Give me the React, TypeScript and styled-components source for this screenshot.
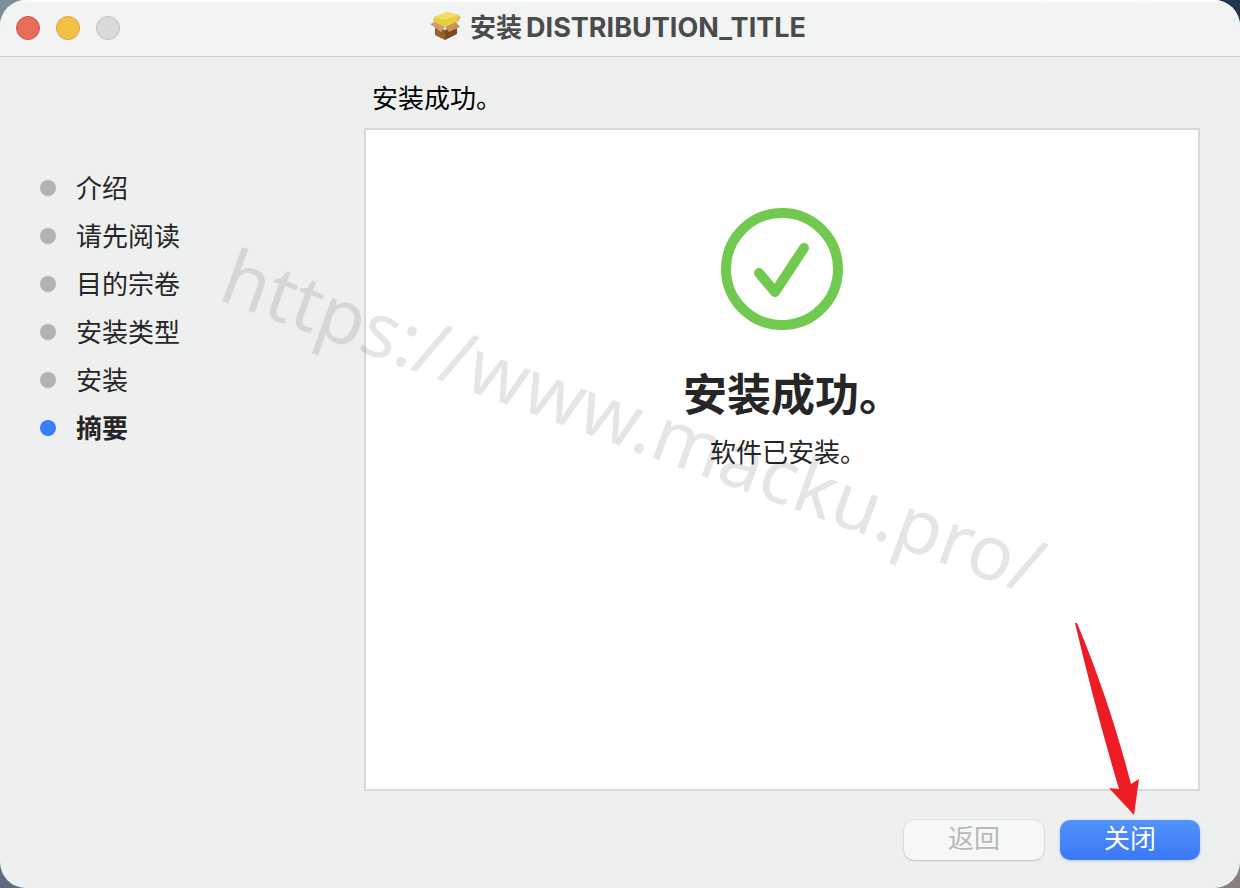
import React from "react";
import styled, { createGlobalStyle } from "styled-components";

const Global = createGlobalStyle`
  * { box-sizing: border-box; }
  body {
    margin: 0;
    background: linear-gradient(90deg, #7b8f96 0, #7b8f96 50%, #20364c 50%) 0 0 / 100% 50% no-repeat,
      linear-gradient(90deg, #5d6b7c 0, #5d6b7c 50%, #8a7f7f 50%) 0 100% / 100% 50% no-repeat;
    font-family: Inter, "Noto Sans CJK SC", sans-serif;
    font-size: 26px;
    line-height: 32px;
    color: #262626;
  }
`;

const Window = styled.div`
  position: relative;
  display: flex;
  flex-direction: column;
  min-height: 100vh;
  overflow: hidden;
  border-radius: 26px;
  background: #eef0ef;
`;

const TitleBar = styled.header`
  display: grid;
  grid-template-columns: 1fr auto 1fr;
  align-items: center;
  height: 57px;
  padding: 0 16px;
  background: linear-gradient(90deg, #f2f4f3 60%, #f2f3f5);
  border-bottom: 1px solid #c9cbca;
  box-shadow: inset 0 2px 0 #fafbfb;
`;

const Lights = styled.div`
  display: flex;
  gap: 16px;
`;

const Light = styled.button<{ $fill: string; $edge: string }>`
  width: 24px;
  height: 24px;
  padding: 0;
  border: 1px solid ${(p) => p.$edge};
  border-radius: 50%;
  background: ${(p) => p.$fill};
`;

const Title = styled.h1`
  display: flex;
  align-items: center;
  gap: 8px;
  margin: 0;
  padding-right: 4px;
  font-size: 26px;
  font-weight: 700;
  line-height: 32px;
  color: #4a4c4b;
`;

const TitleText = styled.span`
  display: flex;
  align-items: baseline;
  gap: 4px;
`;

const ProductName = styled.span`
  font-size: 27px;
`;

const Content = styled.div`
  flex: 1;
  display: grid;
  grid-template-columns: 324px 1fr;
  padding: 24px 40px 28px 40px;
`;

const Steps = styled.ol`
  display: flex;
  flex-direction: column;
  gap: 16px;
  margin: 0;
  padding: 92px 0 0;
  list-style: none;
`;

const Step = styled.li<{ $current?: boolean }>`
  display: flex;
  align-items: center;
  gap: 20px;
  font-weight: ${(p) => (p.$current ? 700 : 400)};

  &::before {
    content: "";
    width: 16px;
    height: 16px;
    margin-bottom: 2px;
    border-radius: 50%;
    background: ${(p) => (p.$current ? "#3c7cf7" : "#b1b3b2")};
  }
`;

const Main = styled.main`
  display: flex;
  flex-direction: column;
`;

const Heading = styled.h2`
  margin: 0;
  padding: 2px 8px 13px;
  font-size: 26px;
  font-weight: 400;
  line-height: 32px;
  color: #000;
`;

const Panel = styled.section`
  flex: 1;
  display: flex;
  flex-direction: column;
  align-items: center;
  padding-top: 77px;
  border: 2px solid #d7d9d8;
  background: #fff;
`;

const Result = styled.h3`
  margin: 0;
  padding: 32px 0 10px 22px;
  font-size: 44px;
  font-weight: 700;
  line-height: 64px;
`;

const Detail = styled.p`
  margin: 0;
  padding-left: 12px;
`;

const Footer = styled.footer`
  display: flex;
  justify-content: flex-end;
  gap: 16px;
  padding-top: 29px;
`;

const Button = styled.button<{ $primary?: boolean }>`
  width: 140px;
  height: 40px;
  padding: 0 0 2px;
  border: 0;
  border-radius: 10px;
  font: inherit;
  color: ${(p) => (p.$primary ? "#fff" : "#b7b9b8")};
  background: ${(p) => (p.$primary ? "linear-gradient(#5292fb, #3a78f7)" : "#f6f8f7")};
  box-shadow: ${(p) =>
    p.$primary ? "0 1px 3px rgba(60, 120, 247, 0.35)" : "0 0 1px 1px rgba(0, 0, 0, 0.04), 0 1px 2px rgba(0, 0, 0, 0.15)"};
`;

const Watermark = styled.div`
  position: absolute;
  inset: 0;
  display: flex;
  align-items: center;
  justify-content: center;
  pointer-events: none;

  span {
    font-family: "Noto Sans", sans-serif;
    font-size: 76px;
    line-height: 96px;
    white-space: nowrap;
    color: rgba(0, 0, 0, 0.1);
    transform: translate(14px, -24px) rotate(20deg);
  }
`;

const Arrow = styled.svg`
  position: absolute;
  right: 100px;
  bottom: 72px;
  pointer-events: none;
`;

const PackageIcon = () => (
  <svg width="32" height="32" viewBox="0 0 32 32" aria-hidden="true">
    <path d="M5 13 15 18V28L5 23Z" fill="#95602f" />
    <path d="M15 18 27 13V22L15 28Z" fill="#7a4a20" />
    <path d="M3 7 9 4 7 10 4 11Z" fill="#d9b183" />
    <path d="M25 2 31 5 28 10 24 9Z" fill="#dfb38c" />
    <path d="M4 5 17 0 29 3 26 11 14 15 5 11Z" fill="#e8d03a" />
    <path d="M4 5 17 0 29 3 15 8Z" fill="#efdf66" />
    <path d="M15 8 14 15" fill="none" stroke="#dfc83c" />
    <path d="M5 10 15 15 11 20 0 12Z" fill="#d09c6c" />
    <path d="M15 15 26 10 30 15 19 20Z" fill="#c8925f" />
  </svg>
);

const steps = ["介绍", "请先阅读", "目的宗卷", "安装类型", "安装", "摘要"];

export default function App() {
  return (
    <>
      <Global />
      <Window lang="zh-CN">
        <TitleBar>
          <Lights>
            <Light $fill="#e66d5c" $edge="#d25443" aria-label="关闭窗口" />
            <Light $fill="#f2bf47" $edge="#d9a23a" aria-label="最小化" />
            <Light $fill="#d9dbda" $edge="#bcbebd" aria-label="缩放" disabled />
          </Lights>
          <Title>
            <PackageIcon />
            <TitleText>
              <span>安装</span>
              <ProductName>DISTRIBUTION_TITLE</ProductName>
            </TitleText>
          </Title>
        </TitleBar>
        <Content>
          <Steps>
            {steps.map((s, i) => (
              <Step key={s} $current={i === steps.length - 1}>
                {s}
              </Step>
            ))}
          </Steps>
          <Main>
            <Heading>安装成功。</Heading>
            <Panel>
              <svg width="124" height="124" viewBox="0 0 124 124" fill="none" stroke="#72c950" aria-hidden="true">
                <circle cx="62" cy="62" r="56" strokeWidth="10" />
                <path d="M39 66 55 85 84 41" strokeWidth="10" strokeLinecap="round" strokeLinejoin="round" />
              </svg>
              <Result>安装成功。</Result>
              <Detail>软件已安装。</Detail>
            </Panel>
            <Footer>
              <Button disabled>返回</Button>
              <Button $primary>关闭</Button>
            </Footer>
          </Main>
        </Content>
        <Watermark>
          <span>https://www.macku.pro/</span>
        </Watermark>
        <Arrow width="66" height="194" viewBox="0 0 66 194" aria-hidden="true">
          <path d="M1 1 3 1C26 56 43 108 57 162L65 157 60 193 35 166 45 167C28 110 14 56 1 1Z" fill="#ee1c25" />
        </Arrow>
      </Window>
    </>
  );
}
